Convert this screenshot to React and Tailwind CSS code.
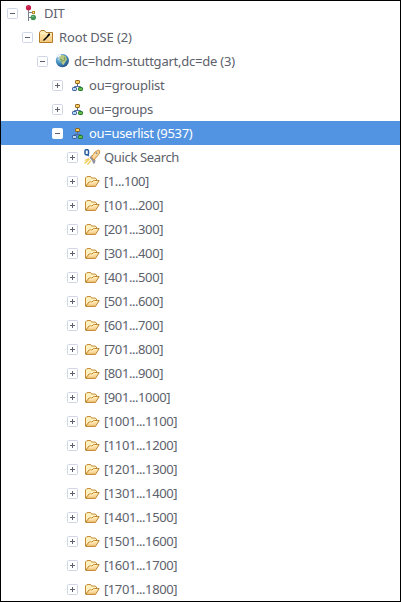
import React from "react";

function DitIcon() {
  return (
    <>
      <path d="M4.5 5v11M4.5 7.5h4M4.5 12.5h3" stroke="#77808a" fill="none" />
      <circle cx="4.5" cy="2.7" r="2.6" fill="#c51b48" />
      <path d="M3 1.8h2" stroke="#dc4a70" />
      <rect x="8.5" y="6.5" width="2" height="2" fill="#fff2b0" stroke="#b88a20" />
      <circle cx="9.3" cy="12.5" r="2.7" fill="#45945a" />
      <path d="M7.8 11.5h2" stroke="#80c48b" />
    </>
  );
}

function RootIcon() {
  return (
    <>
      <path d="M.5 13.5v-10L2 1.5h3.5l1.5 2h6.5v10z" fill="url(#gold)" stroke="#b57b27" />
      <path d="M1.5 4.5h11" stroke="#fff3c7" />
      <path d="M3.5 11.5h2l5.5-5.5V4.5H9.5L7.5 7.5z" fill="#000" />
    </>
  );
}

function GlobeIcon() {
  return (
    <>
      <circle cx="8.4" cy="7.6" r="6.6" fill="url(#globe)" />
      <path d="M6 2.5l3-.5 3 1.5 1 3-1.5 2-2 3.5-1.5-1-.5-2-2-2-.5-2z" fill="#b9c783" />
      <path d="M6 6l2 1v2M10 4l1 2-1.5 2" stroke="#5d985c" fill="none" />
      <path d="M3.7 4.3C4.5 3 5.5 2.3 7 2" stroke="#f5fbff" strokeWidth="1.3" fill="none" />
      <path d="M4 6.5l2-1" stroke="#a9d7ef" />
    </>
  );
}

function OrgIcon() {
  return (
    <>
      <path d="M8.5 6.5v3M5.5 11V9.5h6V11" stroke="#526f9c" fill="none" />
      <rect x="6.5" y="3.5" width="4" height="3" rx=".7" fill="#f4cf66" stroke="#8f5d10" />
      <rect x="3.5" y="10.5" width="4" height="3" rx=".7" fill="#b9d7f4" stroke="#345b9c" />
      <rect x="9.5" y="10.5" width="4" height="3" rx=".7" fill="#65bd45" stroke="#1d7634" />
    </>
  );
}

function RocketIcon() {
  return (
    <>
      <path d="M.5 14.5l5-4.5M3.5 15.5l3.5-4M1 11.5l4-2" stroke="#f2ca55" strokeWidth="1.3" />
      <path d="M5.5 8.5L8 6l3.5 5-.5 3-1.5 1-1.5-3.5z" fill="#9292a0" />
      <path d="M7.5 8L11 3l3.5-2 1 .5v3L12.5 8 10 11z" fill="#fbd391" stroke="#c78a3c" strokeWidth=".9" />
      <path d="M9 7.7L13.5 3" stroke="#fff0c7" />
      <circle cx="12.5" cy="4.2" r=".9" fill="#8b8ca0" />
      <rect x="1" y=".7" width="3.5" height="5" rx="1.3" fill="#fff" stroke="#265da0" strokeWidth="1.5" />
      <path d="M3 5.7l2 1.3" stroke="#265da0" strokeWidth="1.3" />
    </>
  );
}

function FolderIcon() {
  return (
    <>
      <path d="M1.5 13V5L3 3.5h3.5l1 1.5h3.5l1.5 1v2" fill="#fff0bd" stroke="#c58a36" />
      <path d="M1.7 13.4L5 9h3l1.5-1.4h5.7L11.5 13.4z" fill="url(#gold)" stroke="#bd812d" strokeLinejoin="round" />
      <path d="M5.3 10h3l1.5-1.4h3.5" stroke="#fff0bd" fill="none" />
    </>
  );
}

const icons = { dit: DitIcon, root: RootIcon, globe: GlobeIcon, org: OrgIcon, rocket: RocketIcon, folder: FolderIcon };
const indents = ["pl-[6px]", "pl-[21px]", "pl-[36px]", "pl-[51px]", "pl-[66px]"];

const entries = [
  { label: "DIT", level: 0, icon: "dit", open: true, tracking: "tracking-[-0.2px]" },
  { label: "Root DSE (2)", level: 1, icon: "root", open: true, tracking: "tracking-[-0.13px]" },
  { label: "dc=hdm-stuttgart,dc=de (3)", level: 2, icon: "globe", open: true, tracking: "tracking-[-0.23px]" },
  { label: "ou=grouplist", level: 3, icon: "org", tracking: "tracking-[-0.2px]" },
  { label: "ou=groups", level: 3, icon: "org", tracking: "tracking-[-0.3px]" },
  { label: "ou=userlist (9537)", level: 3, icon: "org", open: true, selected: true, tracking: "tracking-[-0.3px]" },
  { label: "Quick Search", level: 4, icon: "rocket", tracking: "tracking-[-0.35px]" },
  ...Array.from({ length: 18 }, (_, i) => ({
    label: `[${i * 100 + 1}...${(i + 1) * 100}]`,
    level: 4,
    icon: "folder",
    tracking: "tracking-[-0.42px]",
  })),
];

function TreeRow({ label, level, icon, open, selected, tracking }) {
  const Icon = icons[icon];
  return (
    <div className={`flex h-6 items-center ${indents[level]} ${selected ? "bg-[#5294e2] text-white" : "text-[#5c616c]"}`}>
      <svg className="mt-px size-[11px] shrink-0" viewBox="0 0 11 11">
        <rect x=".5" y=".5" width="10" height="10" rx="1" fill="#fff" stroke={selected ? "#fff" : "#cfd6e6"} />
        <path d={open ? "M3 5.5h5" : "M3 5.5h5M5.5 3v5"} stroke="#5c616c" />
      </svg>
      <svg className="ml-[6px] size-4 shrink-0" viewBox="0 0 16 16"><Icon /></svg>
      <span className={`ml-1 whitespace-pre leading-6 ${tracking}`}>{label}</span>
    </div>
  );
}

export default function App() {
  return (
    <div className="h-[602px] w-[401px] overflow-hidden border border-black bg-white font-['Noto_Sans',sans-serif] text-[13px]">
      <svg className="absolute size-0">
        <defs>
          <linearGradient id="gold" x2="0" y2="1">
            <stop stopColor="#fff0bd" /><stop offset="1" stopColor="#f4c67a" />
          </linearGradient>
          <radialGradient id="globe" cx=".35" cy=".3" r=".75">
            <stop stopColor="#b8dcf0" /><stop offset=".55" stopColor="#438fc0" /><stop offset="1" stopColor="#244f82" />
          </radialGradient>
        </defs>
      </svg>
      {entries.map((entry) => <TreeRow key={entry.label} {...entry} />)}
    </div>
  );
}
